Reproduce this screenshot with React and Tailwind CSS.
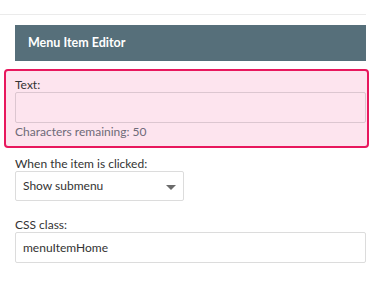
export default function App() {
  return (
    <div
      className="w-[374px] h-[291px] bg-white text-[12px] text-[#333]"
      style={{ fontFamily: '"Lato", "Open Sans", sans-serif' }}
    >
      <div className="w-[366px] h-[15px] border-b border-[#ebebeb]" />

      <div className="ml-[15px] mt-[10px] w-[351px] h-[36px] bg-[#566f7a] flex items-center pl-[13px]">
        <span className="text-white font-bold text-[12.5px]">Menu Item Editor</span>
      </div>

      <div className="ml-[4px] mt-[8px] w-[365px] h-[79px] border-2 border-[#e8175d] rounded-[4px] bg-[#fde4ee] pl-[9px] pr-[1px] pt-[6px]">
        <div className="leading-[15px]">Text:</div>
        <div className="h-[31px] border border-[#dcc6d0] rounded-[2px]" />
        <div className="leading-[18px] text-[#6e6a78]">Characters remaining: 50</div>
      </div>

      <div className="pl-[15px] w-[366px]">
        <div className="mt-[9px] leading-[14px]">When the item is clicked:</div>
        <div className="w-[169px] h-[30px] border border-[#dcdcdc] rounded-[2px] flex items-center justify-between pl-[7px] pr-[7px]">
          <span>Show submenu</span>
          <svg width="10" height="5" viewBox="0 0 10 5" className="mt-[2px]">
            <path d="M0 0 L10 0 L5 5 Z" fill="#6b6b6b" />
          </svg>
        </div>

        <div className="mt-[16px] leading-[15px]">CSS class:</div>
        <div className="h-[31px] border border-[#dcdcdc] rounded-[2px] flex items-center pl-[7px]">
          menuItemHome
        </div>
      </div>
    </div>
  );
}
